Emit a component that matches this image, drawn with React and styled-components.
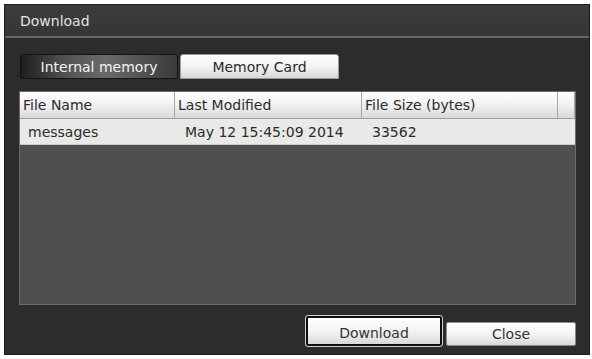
import React from 'react';
import styled, { createGlobalStyle } from 'styled-components';

const Global = createGlobalStyle`
  html, body {
    margin: 0;
    padding: 0;
    background: #ffffff;
  }
  body {
    font-family: "DejaVu Sans", Verdana, sans-serif;
    font-size: 14px;
  }
`;

const Page = styled.div`
  padding: 4px 0 0 4px;
`;

const Dialog = styled.section`
  width: 586px;
  height: 351px;
  background: #2c2c2c;
  border: 1px solid #1c1c1c;
  box-sizing: border-box;
  display: flex;
  flex-direction: column;
`;

const TitleBar = styled.header`
  height: 31px;
  flex: none;
  background: linear-gradient(#3c3c3c, #363636);
  border-bottom: 2px solid #676767;
  color: #e2e2e2;
  padding-left: 15px;
  display: flex;
  align-items: center;
`;

const Body = styled.div`
  flex: 1;
  display: flex;
  flex-direction: column;
  padding: 16px 13px 8px 14px;
`;

const Tabs = styled.div`
  display: flex;
  gap: 2px;
  padding-left: 1px;
`;

const Tab = styled.button`
  width: ${p => p.$w}px;
  height: 25px;
  border-radius: 3px 3px 0 0;
  font-family: inherit;
  font-size: 14px;
  padding: 0;
  cursor: pointer;
  ${p => p.$active ? `
    background: linear-gradient(90deg, #1e1e1e 0%, #555 30%, #6a6a6a 55%, #3a3a3a 100%);
    color: #f2f2f2;
    border: 1px solid #141414;
  ` : `
    background: linear-gradient(#ffffff, #f2f2f2 55%, #d6d6d6);
    color: #2a2a2a;
    border: 1px solid #9a9a9a;
  `}
`;

const Table = styled.div`
  margin-top: 12px;
  height: 214px;
  background: #4f4f4f;
  border: 1px solid #6c6c6c;
  box-sizing: border-box;
  display: flex;
  flex-direction: column;
`;

const Row = styled.div`
  display: grid;
  grid-template-columns: 155px 187px 196px 1fr;
  height: ${p => p.$h}px;
  align-items: center;
  color: #2b2b2b;
  background: ${p => p.$head ? 'linear-gradient(#ffffff, #f0f0f0 50%, #d9d9d9)' : '#e9e9e7'};
  border-bottom: 1px solid ${p => p.$head ? '#9c9c9c' : '#c8c8c8'};
`;

const HeadCell = styled.div`
  height: 100%;
  display: flex;
  align-items: center;
  padding-left: 3px;
  border-right: 1px solid #a8a8a8;
  box-sizing: border-box;
`;

const Cell = styled.div`
  padding-left: ${p => p.$pad || 10}px;
`;

const Footer = styled.div`
  margin-top: auto;
  display: flex;
  justify-content: flex-end;
  align-items: flex-end;
  gap: 4px;
`;

const Button = styled.button`
  height: ${p => p.$focused ? 30 : 24}px;
  width: ${p => p.$w}px;
  font-family: inherit;
  font-size: 14px;
  color: #333;
  padding: ${p => p.$focused ? '3px 0 0' : '0'};
  background: linear-gradient(#ffffff, #f2f2f2 55%, #d8d8d8);
  border: ${p => p.$focused ? '2px solid #0e0e0e' : '1px solid #8a8a8a'};
  outline: ${p => p.$focused ? '1px solid #d0d0d0' : 'none'};
  outline-offset: 0;
  box-sizing: border-box;
  border-radius: 2px;
  cursor: pointer;
`;

export default function App() {
  return (
    <Page>
      <Global />
      <Dialog>
        <TitleBar>Download</TitleBar>
        <Body>
          <Tabs>
            <Tab $active $w={158}>Internal memory</Tab>
            <Tab $w={159}>Memory Card</Tab>
          </Tabs>
          <Table>
            <Row $head $h={26}>
              <HeadCell>File Name</HeadCell>
              <HeadCell>Last Modified</HeadCell>
              <HeadCell>File Size (bytes)</HeadCell>
              <HeadCell />
            </Row>
            <Row $h={25}>
              <Cell $pad={8}>messages</Cell>
              <Cell>May 12 15:45:09 2014</Cell>
              <Cell>33562</Cell>
              <Cell />
            </Row>
          </Table>
          <Footer>
            <Button $focused $w={136}>Download</Button>
            <Button $w={130}>Close</Button>
          </Footer>
        </Body>
      </Dialog>
    </Page>
  );
}
